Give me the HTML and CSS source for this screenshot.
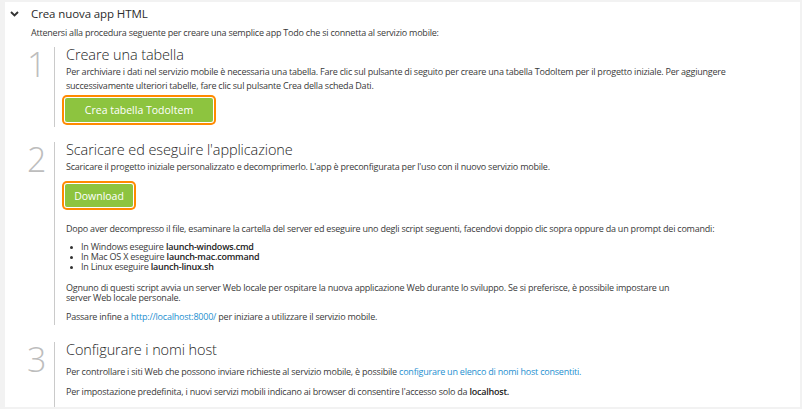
FILE: index.html
```html
<!DOCTYPE html>
<html lang="it">
<head>
<meta charset="utf-8">
<title>Crea nuova app HTML</title>
<link rel="stylesheet" href="styles.css">
</head>
<body>
<div class="panel">
  <div class="hdr">
    <svg class="chev" width="9" height="6" viewBox="0 0 9 6"><path d="M1 1 L4.5 4.5 L8 1" fill="none" stroke="#333" stroke-width="1.9"/></svg>
    <span class="hdr-title">Crea nuova app HTML</span>
  </div>
  <div class="body">
    <p class="intro">Attenersi alla procedura seguente per creare una semplice app Todo che si connetta al servizio mobile:</p>

    <div class="step s1">
      <div class="num">1</div>
      <div class="content">
        <h2 class="title">Creare una tabella</h2>
        <p class="txt lead">Per archiviare i dati nel servizio mobile è necessaria una tabella. Fare clic sul pulsante di seguito per creare una tabella TodoItem per il progetto iniziale. Per aggiungere<br>successivamente ulteriori tabelle, fare clic sul pulsante Crea della scheda Dati.</p>
        <button class="btn btn-wide">Crea tabella TodoItem</button>
      </div>
    </div>

    <div class="step s2">
      <div class="num">2</div>
      <div class="content">
        <h2 class="title">Scaricare ed eseguire l'applicazione</h2>
        <p class="txt lead">Scaricare il progetto iniziale personalizzato e decomprimerlo. L'app è preconfigurata per l'uso con il nuovo servizio mobile.</p>
        <button class="btn btn-dl">Download</button>
        <p class="txt after">Dopo aver decompresso il file, esaminare la cartella del server ed eseguire uno degli script seguenti, facendovi doppio clic sopra oppure da un prompt dei comandi:</p>
        <ul class="list">
          <li>In Windows eseguire <b>launch-windows.cmd</b></li>
          <li>In Mac OS X eseguire <b>launch-mac.command</b></li>
          <li>In Linux eseguire <b>launch-linux.sh</b></li>
        </ul>
        <p class="txt tight">Ognuno di questi script avvia un server Web locale per ospitare la nuova applicazione Web durante lo sviluppo. Se si preferisce, è possibile impostare un<br>server Web locale personale.</p>
        <p class="txt last">Passare infine a <a href="#">http://localhost:8000/</a> per iniziare a utilizzare il servizio mobile.</p>
      </div>
    </div>

    <div class="step s3">
      <div class="num">3</div>
      <div class="content">
        <h2 class="title">Configurare i nomi host</h2>
        <p class="txt p3a">Per controllare i siti Web che possono inviare richieste al servizio mobile, è possibile <a href="#">configurare un elenco di nomi host consentiti.</a></p>
        <p class="txt p3b">Per impostazione predefinita, i nuovi servizi mobili indicano ai browser di consentire l'accesso solo da <b>localhost.</b></p>
      </div>
    </div>
  </div>
</div>
</body>
</html>
```
FILE: styles.css
```css
html, body {
  margin: 0;
  height: 100%;
}
body {
  background: #f2f2f2;
  padding: 2px 2px 2px 5px;
  box-sizing: border-box;
  overflow: hidden;
  font-family: "Open Sans", "Noto Sans", sans-serif;
  color: #3a3a3a;
}
.panel {
  background: #fff;
  height: 100%;
  display: flex;
  flex-direction: column;
}
.hdr {
  height: 23px;
  display: flex;
  align-items: center;
  padding-left: 5px;
  flex: none;
}
.chev {
  display: block;
  margin-right: 12px;
}
.hdr-title {
  font-size: 11.5px;
  letter-spacing: -0.1px;
  color: #2b2b2b;
}
.body {
  flex: 1;
  display: flex;
  flex-direction: column;
  padding-left: 26px;
}
p { margin: 0; }
.intro, .txt {
  font-size: 9px;
  letter-spacing: -0.22px;
  line-height: 14px;
  white-space: nowrap;
}
.intro { margin-top: 1px; }
.step {
  display: flex;
  flex: none;
}
.s1 { margin-top: 7px; }
.s2 { margin-top: 15px; }
.s3 { margin-top: 17px; flex: 1; }
.num {
  width: 23px;
  text-indent: -4px;
  font-size: 34px;
  line-height: 34px;
  font-weight: 300;
  color: #bdbdbd;
  flex: none;
}
.content {
  border-left: 1px solid #cacaca;
  padding-left: 11px;
  flex: 1;
}
.title {
  margin: 0;
  font-size: 14.5px;
  line-height: 16px;
  font-weight: 300;
  color: #1f1f1f;
  letter-spacing: -0.1px;
}
.lead { margin-top: 2px; }
.btn {
  display: block;
  margin-left: -1px;
  padding: 0;
  border: none;
  border-radius: 2px;
  background: #8dc43f;
  color: #fff;
  font-family: "Open Sans", "Noto Sans", sans-serif;
  font-size: 10.5px;
  font-weight: 400;
  box-shadow: 0 0 0 1px #fff, 0 0 0 3px #ff8a00;
}
.btn-wide {
  width: 148px;
  height: 24px;
  margin-top: 5px;
  margin-bottom: 5px;
}
.btn-dl {
  width: 68px;
  height: 23px;
  margin-top: 10px;
}
.after { margin-top: 15px; }
.list {
  list-style: none;
  margin: 6px 0 0;
  padding: 0;
  font-size: 9px;
  letter-spacing: -0.22px;
  line-height: 10px;
}
.list li {
  display: flex;
  align-items: center;
}
.list li::before {
  content: "";
  width: 3px;
  height: 3px;
  border-radius: 50%;
  background: #333;
  margin: 0 8px 0 4px;
  flex: none;
}
.list b { margin-left: 0.25em; }
b {
  font-weight: 600;
  color: #222;
}
.tight {
  margin-top: 11px;
  line-height: 10px;
}
.last {
  margin-top: 7px;
  margin-bottom: 1px;
}
a {
  color: #1e8fd0;
  text-decoration: none;
}
.p3a { margin-top: 7px; }
.p3b { margin-top: 6px; }
```
